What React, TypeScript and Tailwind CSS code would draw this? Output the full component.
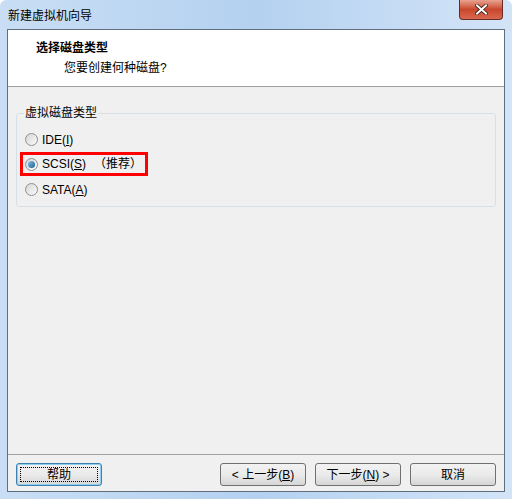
import { useState } from "react";

const font = { fontFamily: '"Liberation Sans", "Noto Sans CJK SC", sans-serif' };

function Radio({ checked }: { checked: boolean }) {
  return (
    <span className="relative inline-block w-[13px] h-[13px] rounded-full border border-[#8e8f8f] bg-gradient-to-br from-[#d6d6d6] to-[#fbfbfb] shrink-0">
      {checked && (
        <span className="absolute left-[2px] top-[2px] w-[7px] h-[7px] rounded-full bg-gradient-to-br from-[#7ec2ee] to-[#1a5f8e]" />
      )}
    </span>
  );
}

function Btn({ children, focused }: { children: React.ReactNode; focused?: boolean }) {
  return (
    <button
      className={`relative h-[23px] w-[86px] rounded-[3px] border text-[12px] text-black bg-gradient-to-b from-[#f2f2f2] via-[#ebebeb] to-[#d6d6d6] flex items-center justify-center ${
        focused ? "border-[#3c7fb1] shadow-[inset_0_0_0_1px_#8fd0ef]" : "border-[#707070]"
      }`}
    >
      {focused && <span className="absolute inset-[3px] border border-dotted border-black" />}
      <span>{children}</span>
    </button>
  );
}

export default function App() {
  const [sel, setSel] = useState("scsi");
  return (
    <div
      className="w-[512px] h-[499px] relative bg-gradient-to-r from-[#c9def4] via-[#b4d1f0] to-[#d3e4f7] overflow-hidden rounded-t-[6px]"
      style={font}
    >
      {/* title bar */}
      <div className="h-[29px] flex items-start">
        <span className="ml-[8px] mt-[7px] text-[12px] text-black">新建虚拟机向导</span>
      </div>
      <div className="absolute right-[9px] top-0 w-[44px] h-[20px] rounded-b-[4px] border border-t-0 border-[#6b2b25] bg-gradient-to-b from-[#e8a18f] via-[#c9462c] to-[#d8684f] flex items-center justify-center">
        <svg width="13" height="11" viewBox="0 0 13 11">
          <path d="M2 1.5 L11 9.5 M11 1.5 L2 9.5" stroke="#3b1a12" strokeWidth="3.6" strokeLinecap="square" />
          <path d="M2 1.5 L11 9.5 M11 1.5 L2 9.5" stroke="#ffffff" strokeWidth="2" strokeLinecap="square" />
        </svg>
      </div>

      {/* client */}
      <div className="mx-[7px] h-[463px] border border-[#5f6f80] bg-[#f0f0f0] flex flex-col">
        <div className="h-[57px] bg-white border-b border-[#a0a0a0] shrink-0">
          <div className="ml-[28px] mt-[10px] text-[12px] font-bold leading-[16px]">选择磁盘类型</div>
          <div className="ml-[56px] mt-[4px] text-[12px] leading-[16px]">您要创建何种磁盘?</div>
        </div>

        <div className="flex-1 flex flex-col">
          <div className="relative mt-[26px] mx-[8px] h-[94px] border border-[#d5dfe5] rounded-[3px]">
            <span className="absolute left-[7px] -top-[9px] px-[1px] bg-[#f0f0f0] text-[12px] leading-[16px]">虚拟磁盘类型</span>
            <div className="pt-[17px] pl-[8px] flex flex-col text-[12px]">
              <label className="flex items-center gap-[4px] h-[17px]" onClick={() => setSel("ide")}>
                <Radio checked={sel === "ide"} />
                <span>
                  IDE(<u>I</u>)
                </span>
              </label>
              <label
                className="mt-[4px] -ml-[5px] w-[128px] h-[24px] border-[3px] border-[#ff0000] flex items-center gap-[4px] pl-[2px]"
                onClick={() => setSel("scsi")}
              >
                <Radio checked={sel === "scsi"} />
                <span>
                  SCSI(<u>S</u>)
                </span>
                <span className="ml-[4px]">（推荐）</span>
              </label>
              <label className="mt-[5px] flex items-center gap-[4px] h-[17px]" onClick={() => setSel("sata")}>
                <Radio checked={sel === "sata"} />
                <span>
                  SATA(<u>A</u>)
                </span>
              </label>
            </div>
          </div>
        </div>

        <div className="h-[37px] border-t border-[#a0a0a0] shrink-0 flex items-start pt-[8px] px-[8px]">
          <Btn focused>帮助</Btn>
          <div className="flex-1" />
          <Btn>
            &lt; 上一步(<u>B</u>)
          </Btn>
          <div className="w-[9px]" />
          <Btn>
            下一步(<u>N</u>) &gt;
          </Btn>
          <div className="w-[9px]" />
          <Btn>取消</Btn>
        </div>
      </div>
    </div>
  );
}
